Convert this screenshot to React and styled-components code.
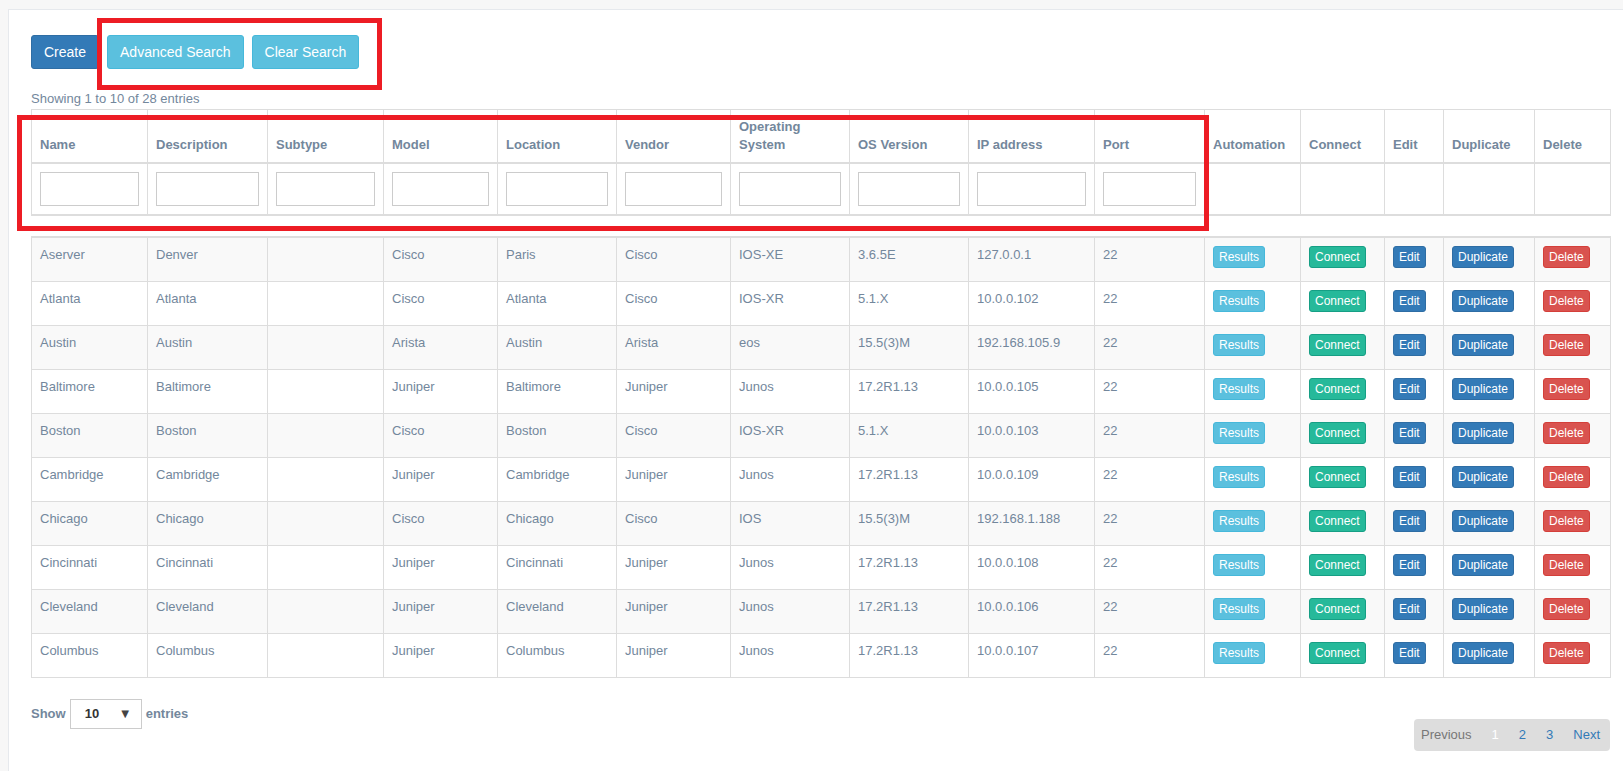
import React from 'react';
import styled, { createGlobalStyle } from 'styled-components';

const GlobalStyle = createGlobalStyle`
  html, body {
    margin: 0;
    padding: 0;
    background: #F7F7F7;
    overflow: hidden;
  }
  body {
    font-family: "Liberation Sans", Arial, sans-serif;
    font-size: 13px;
    color: #73879C;
  }
  * { box-sizing: border-box; }
`;

const widths = [116, 120, 116, 114, 119, 114, 119, 119, 126, 110, 96, 84, 59, 91, 76];
const headers = ['Name', 'Description', 'Subtype', 'Model', 'Location', 'Vendor', 'Operating System', 'OS Version', 'IP address', 'Port', 'Automation', 'Connect', 'Edit', 'Duplicate', 'Delete'];
const filterCount = 10;

const rows = [
  ['Aserver', 'Denver', '', 'Cisco', 'Paris', 'Cisco', 'IOS-XE', '3.6.5E', '127.0.0.1', '22'],
  ['Atlanta', 'Atlanta', '', 'Cisco', 'Atlanta', 'Cisco', 'IOS-XR', '5.1.X', '10.0.0.102', '22'],
  ['Austin', 'Austin', '', 'Arista', 'Austin', 'Arista', 'eos', '15.5(3)M', '192.168.105.9', '22'],
  ['Baltimore', 'Baltimore', '', 'Juniper', 'Baltimore', 'Juniper', 'Junos', '17.2R1.13', '10.0.0.105', '22'],
  ['Boston', 'Boston', '', 'Cisco', 'Boston', 'Cisco', 'IOS-XR', '5.1.X', '10.0.0.103', '22'],
  ['Cambridge', 'Cambridge', '', 'Juniper', 'Cambridge', 'Juniper', 'Junos', '17.2R1.13', '10.0.0.109', '22'],
  ['Chicago', 'Chicago', '', 'Cisco', 'Chicago', 'Cisco', 'IOS', '15.5(3)M', '192.168.1.188', '22'],
  ['Cincinnati', 'Cincinnati', '', 'Juniper', 'Cincinnati', 'Juniper', 'Junos', '17.2R1.13', '10.0.0.108', '22'],
  ['Cleveland', 'Cleveland', '', 'Juniper', 'Cleveland', 'Juniper', 'Junos', '17.2R1.13', '10.0.0.106', '22'],
  ['Columbus', 'Columbus', '', 'Juniper', 'Columbus', 'Juniper', 'Junos', '17.2R1.13', '10.0.0.107', '22'],
];

const colors = {
  primary: ['#337AB7', '#2E6DA4'],
  info: ['#5BC0DE', '#46B8DA'],
  success: ['#26B99A', '#169F85'],
  danger: ['#D9534F', '#D43F3A'],
};

const Panel = styled.div`
  margin: 9px 0 0 8px;
  min-height: calc(100vh + 20px);
  background: #fff;
  border: 1px solid #E6E9ED;
  border-right: none;
  padding: 25px 0 0 22px;
`;

const Toolbar = styled.div`
  display: flex;
  gap: 8px;
`;

const Button = styled.button`
  font-family: inherit;
  font-size: ${p => (p.$xs ? '12px' : '14px')};
  line-height: ${p => (p.$xs ? '18px' : '20px')};
  padding: ${p => (p.$xs ? '1px 5px' : '6px 12px')};
  border-radius: 3px;
  color: #fff;
  background: ${p => colors[p.$kind][0]};
  border: 1px solid ${p => colors[p.$kind][1]};
  white-space: nowrap;
  cursor: pointer;
`;

const Info = styled.div`
  margin-top: 21px;
  font-size: 13px;
  line-height: 18px;
`;

const Table = styled.table`
  width: 1579px;
  table-layout: fixed;
  border-collapse: collapse;
  border: 1px solid #DDDDDD;
  margin-top: ${p => p.$gap}px;
  border-top-width: ${p => p.$topBorder}px;
`;

const Col = styled.col`
  width: ${p => p.$w}px;
`;

const Th = styled.th`
  text-align: left;
  vertical-align: bottom;
  font-weight: bold;
  font-size: 13px;
  line-height: 18px;
  padding: 8px;
  border: 1px solid #DDDDDD;
  border-bottom: 2px solid #DDDDDD;
  height: 52px;
`;

const FilterCell = styled.td`
  padding: 8px;
  border: 1px solid #DDDDDD;
  border-bottom: 2px solid #DDDDDD;
  height: 51px;
`;

const FilterInput = styled.input`
  display: block;
  width: 100%;
  height: 34px;
  border: 1px solid #CCCCCC;
  background: #fff;
`;

const Row = styled.tr`
  height: 44px;
  background: ${p => (p.$odd ? '#F9F9F9' : '#fff')};
`;

const Td = styled.td`
  padding: 8px;
  vertical-align: top;
  line-height: 18px;
  border: 1px solid #DDDDDD;
  white-space: nowrap;
  overflow: hidden;
`;

const Footer = styled.div`
  width: 1579px;
  display: flex;
  justify-content: space-between;
  align-items: flex-start;
  margin-top: 21px;
`;

const Length = styled.label`
  display: flex;
  align-items: center;
  gap: 4px;
  font-weight: bold;
  height: 30px;
`;

const Select = styled.div`
  width: 72px;
  height: 30px;
  border: 1px solid #CCCCCC;
  display: flex;
  align-items: center;
  justify-content: space-between;
  padding: 0 9px 0 14px;
  color: #333;
  font-weight: bold;
  font-size: 13px;

  span:last-child {
    font-size: 13px;
    color: #444;
  }
`;

const Pager = styled.div`
  margin-top: 20px;
  display: flex;
  background: #DDDDDD;
  border-radius: 4px;
  height: 32px;
  align-items: center;
`;

const PageItem = styled.a`
  padding: 6px 10px;
  line-height: 20px;
  font-size: 13px;
  color: ${p => (p.$current ? '#fff' : p.$disabled ? '#777' : '#337AB7')};
  text-decoration: none;

  &:first-child {
    padding-left: 7px;
  }
`;

const Annotation = styled.div`
  position: absolute;
  left: ${p => p.$x}px;
  top: ${p => p.$y}px;
  width: ${p => p.$w}px;
  height: ${p => p.$h}px;
  border: 5px solid #ED1C24;
  pointer-events: none;
`;

function ColGroup() {
  return (
    <colgroup>
      {widths.map((w, i) => <Col key={i} $w={w} />)}
    </colgroup>
  );
}

export default function App() {
  return (
    <>
      <GlobalStyle />
      <Panel>
        <Toolbar>
          <Button $kind="primary">Create</Button>
          <Button $kind="info">Advanced Search</Button>
          <Button $kind="info">Clear Search</Button>
        </Toolbar>
        <Info>Showing 1 to 10 of 28 entries</Info>

        <Table $gap={1} $topBorder={1}>
          <ColGroup />
          <thead>
            <tr>
              {headers.map(h => (
                <Th key={h}>{h === 'Operating System' ? <>Operating<br />System</> : h}</Th>
              ))}
            </tr>
          </thead>
          <tbody>
            <tr>
              {headers.map((h, i) => (
                <FilterCell key={h}>{i < filterCount && <FilterInput type="text" />}</FilterCell>
              ))}
            </tr>
          </tbody>
        </Table>

        <Table $gap={20} $topBorder={2}>
          <ColGroup />
          <tbody>
            {rows.map((r, i) => (
              <Row key={r[0]} $odd={i % 2 === 0}>
                {r.map((c, j) => <Td key={j}>{c}</Td>)}
                <Td><Button $xs $kind="info">Results</Button></Td>
                <Td><Button $xs $kind="success">Connect</Button></Td>
                <Td><Button $xs $kind="primary">Edit</Button></Td>
                <Td><Button $xs $kind="primary">Duplicate</Button></Td>
                <Td><Button $xs $kind="danger">Delete</Button></Td>
              </Row>
            ))}
          </tbody>
        </Table>

        <Footer>
          <Length>
            Show
            <Select><span>10</span><span>▼</span></Select>
            entries
          </Length>
          <Pager>
            <PageItem $disabled>Previous</PageItem>
            <PageItem $current>1</PageItem>
            <PageItem>2</PageItem>
            <PageItem>3</PageItem>
            <PageItem>Next</PageItem>
          </Pager>
        </Footer>
      </Panel>

      <Annotation $x={97} $y={18} $w={285} $h={72} />
      <Annotation $x={17} $y={115} $w={1192} $h={116} />
    </>
  );
}
